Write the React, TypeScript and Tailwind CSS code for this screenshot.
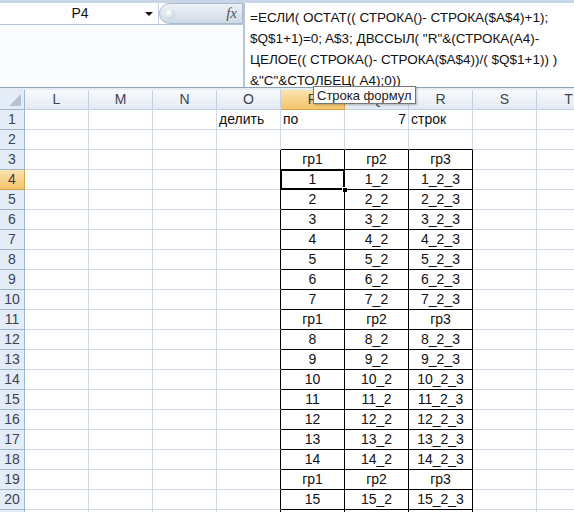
import React from "react";

const COLS = ["L", "M", "N", "O", "P", "Q", "R", "S", "T"];
const ROWS = Array.from({ length: 21 }, (_, i) => i + 1);

const FORMULA = [
  "=ЕСЛИ( ОСТАТ(( СТРОКА()- СТРОКА($A$4)+1);",
  "$Q$1+1)=0; A$3; ДВССЫЛ( \"R\"&(СТРОКА(A4)-",
  "ЦЕЛОЕ(( СТРОКА()- СТРОКА($A$4))/( $Q$1+1)) )",
  "&\"C\"&СТОЛБЕЦ( A4);0))",
];

const inTable = (r: number, c: number) => r >= 3 && c >= 4 && c <= 6;

function cellValue(r: number, c: number): { text: string; align: string } {
  if (r === 1) {
    if (c === 3) return { text: "делить", align: "justify-start" };
    if (c === 4) return { text: "по", align: "justify-start" };
    if (c === 5) return { text: "7", align: "justify-end" };
    if (c === 6) return { text: "строк", align: "justify-start" };
  }
  if (inTable(r, c)) {
    const g = Math.floor((r - 3) / 8);
    const idx = (r - 3) % 8;
    if (idx === 0) return { text: `гр${c - 3}`, align: "justify-center" };
    const n = g * 7 + idx;
    const text = c === 4 ? `${n}` : c === 5 ? `${n}_2` : `${n}_2_3`;
    return { text, align: "justify-center" };
  }
  return { text: "", align: "justify-start" };
}

export default function App() {
  return (
    <div className="relative w-[574px] h-[512px] overflow-hidden bg-white font-['Liberation_Sans',sans-serif] text-[#111]">
      {/* top strip */}
      <div className="h-[3px] bg-[#c7d5e7]" />

      {/* formula bar */}
      <div className="flex h-[84px]">
        <div className="w-[243px] flex flex-col">
          <div className="flex h-[22px] border-b border-[#b9c6d6]">
            <div className="w-[159px] flex items-center bg-white border-r border-[#c6d2e0] relative">
              <span className="flex-1 text-center text-[14px] pl-[2px]">P4</span>
              <span className="absolute right-[5px] top-[9px] w-0 h-0 border-l-[4px] border-r-[4px] border-t-[4px] border-l-transparent border-r-transparent border-t-[#111]" />
            </div>
            <div className="flex-1 flex items-center rounded-l-full bg-[linear-gradient(to_bottom,#eef2f7,#cfdae7)] border border-[#a9b9cc] relative">
              <span className="absolute left-[5px] top-[5px] w-[10px] h-[10px] rounded-full bg-[radial-gradient(circle_at_35%_35%,#ffffff,#b6c3d3)]" />
              <span className="ml-auto mr-[5px] font-['Liberation_Serif',serif] italic text-[15px] text-[#555] leading-none">
                fx
              </span>
            </div>
          </div>
          <div className="flex-1 bg-[#fbfcfe]" />
        </div>
        <div className="w-[2px] bg-[#b8c6d7]" />
        <div className="flex-1 bg-white pl-[5px] pt-[4px] text-[13.5px] leading-[21px] whitespace-nowrap">
          {FORMULA.map((l, i) => (
            <div key={i}>{l}</div>
          ))}
        </div>
      </div>

      {/* separator */}
      <div className="h-px bg-[#8ea3bb]" />
      <div className="h-[2px] bg-[#e6ecf4]" />

      {/* sheet grid */}
      <div className="grid grid-cols-[25px_repeat(9,64px)] text-[14px]">
        {/* corner */}
        <div className="h-[20px] border-r border-b border-[#9eb6ce] bg-[#e4ecf7] flex items-end justify-end pr-[3px] pb-[3px]">
          <svg width="12" height="12" viewBox="0 0 12 12">
            <polygon points="12,0 12,12 0,12" fill="#b4c2d4" />
          </svg>
        </div>
        {COLS.map((c) => (
          <div
            key={c}
            className={
              c === "P"
                ? "h-[20px] flex items-center justify-center border-r border-b border-[#d9a54a] bg-[linear-gradient(to_bottom,#fbe3b0,#f3c46a)] text-[#3b3b3b]"
                : "h-[20px] flex items-center justify-center border-r border-b border-[#c5d1df] bg-[linear-gradient(to_bottom,#f9fbfd,#e2e9f3)] text-[#3b4452]"
            }
          >
            {c}
          </div>
        ))}

        {ROWS.map((r) => (
          <React.Fragment key={r}>
            <div
              className={
                r === 4
                  ? "h-[20px] flex items-center justify-center border-r border-b border-[#d9a54a] bg-[linear-gradient(to_bottom,#fbe3b0,#f3c46a)] text-[#3b3b3b]"
                  : "h-[20px] flex items-center justify-center border-r border-b border-[#9eb6ce] bg-[#e4ecf7] text-[#3b4452]"
              }
            >
              {r}
            </div>
            {COLS.map((_, c) => {
              const v = cellValue(r, c);
              const right = inTable(r, c) || inTable(r, c + 1) ? "border-r-black" : "border-r-[#d0d7e5]";
              const bottom = inTable(r, c) || inTable(r + 1, c) ? "border-b-black" : "border-b-[#d0d7e5]";
              const selected = r === 4 && c === 4;
              return (
                <div
                  key={c}
                  className={`relative h-[20px] flex items-center px-[2px] border-r border-b ${right} ${bottom} ${v.align}`}
                >
                  {v.text}
                  {selected && (
                    <>
                      <span className="absolute left-[-1px] top-[-1px] right-[-1px] bottom-[-1px] border-2 border-black" />
                      <span className="absolute right-[-4px] bottom-[-4px] w-[6px] h-[6px] bg-black border border-white" />
                    </>
                  )}
                </div>
              );
            })}
          </React.Fragment>
        ))}
      </div>

      {/* tooltip */}
      <div className="absolute left-[313px] top-[86px] h-[18px] px-[3px] flex items-center bg-[#fdfdfd] border border-[#767676] shadow-[1px_1px_2px_rgba(0,0,0,0.25)] text-[13px] text-[#222] leading-none">
        Строка формул
      </div>
    </div>
  );
}
